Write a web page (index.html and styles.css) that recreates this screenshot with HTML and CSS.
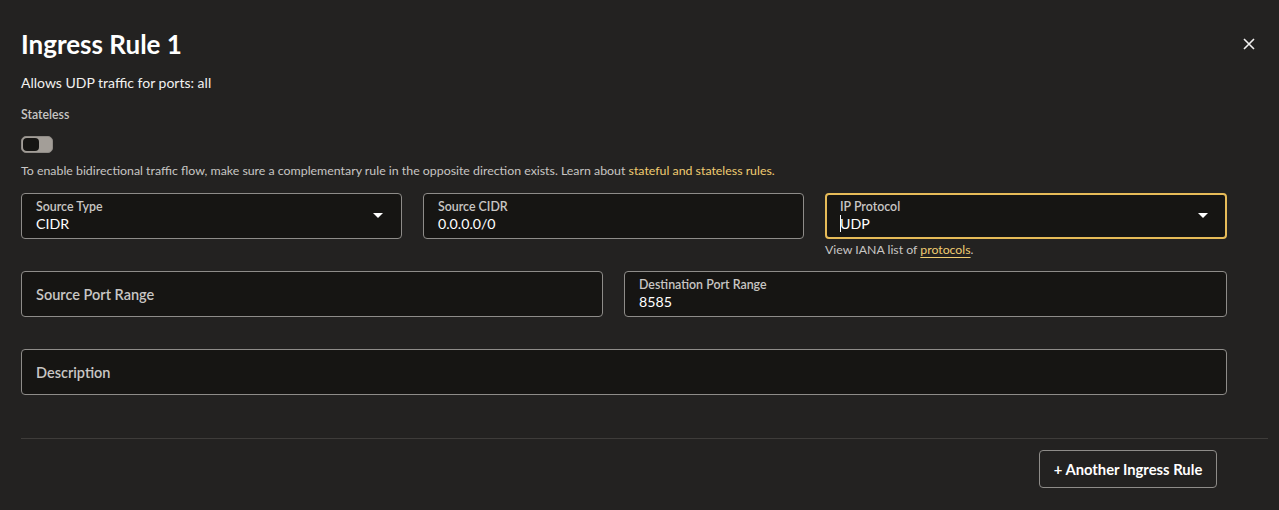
FILE: index.html
```html
<!DOCTYPE html>
<html>
<head>
<meta charset="utf-8">
<link rel="stylesheet" href="styles.css">
</head>
<body>
<div class="panel">
  <div class="header">
    <h1 class="title">Ingress Rule 1</h1>
    <button class="close" aria-label="Close">
      <svg width="12" height="12" viewBox="0 0 12 12"><path d="M1 1L11 11M11 1L1 11" stroke="#f2f1f0" stroke-width="1.6" fill="none"/></svg>
    </button>
  </div>
  <p class="summary">Allows UDP traffic for ports: all</p>
  <div class="label-small">Stateless</div>
  <div class="toggle"><span class="knob"></span></div>
  <p class="help">To enable bidirectional traffic flow, make sure a complementary rule in the opposite direction exists. Learn about <a class="link">stateful and stateless rules.</a></p>

  <div class="row row1">
    <div class="field">
      <div class="box">
        <div class="flabel">Source Type</div>
        <div class="fvalue">CIDR</div>
        <span class="caret"></span>
      </div>
    </div>
    <div class="field">
      <div class="box">
        <div class="flabel">Source CIDR</div>
        <div class="fvalue">0.0.0.0/0</div>
      </div>
    </div>
    <div class="field">
      <div class="box focused">
        <div class="flabel">IP Protocol</div>
        <div class="fvalue"><span class="cursor"></span>UDP</div>
        <span class="caret"></span>
      </div>
      <div class="assist">View IANA list of <a class="ulink">protocols</a>.</div>
    </div>
  </div>

  <div class="row row2">
    <div class="field">
      <div class="box empty"><div class="placeholder">Source Port Range</div></div>
    </div>
    <div class="field">
      <div class="box">
        <div class="flabel">Destination Port Range</div>
        <div class="fvalue">8585</div>
      </div>
    </div>
  </div>

  <div class="row row3">
    <div class="field">
      <div class="box empty"><div class="placeholder">Description</div></div>
    </div>
  </div>

  <div class="divider"></div>
  <div class="footer">
    <button class="btn">+ Another Ingress Rule</button>
  </div>
</div>
</body>
</html>
```

FILE: styles.css
```css
html, body {
  margin: 0;
  padding: 0;
  background: #232221;
  height: 100%;
}
body {
  font-family: Lato, "Noto Sans", sans-serif;
  color: #f2f1f0;
}
.panel {
  padding: 0 11px 0 21px;
}
.header {
  display: flex;
  align-items: center;
  justify-content: space-between;
  height: 44px;
  padding-top: 22px;
  padding-right: 13px;
}
.title {
  margin: 0;
  font-size: 26px;
  font-weight: 700;
  line-height: 44px;
  color: #ffffff;
}
.close {
  background: none;
  border: 0;
  padding: 0;
  width: 12px;
  height: 12px;
  display: flex;
}
.summary {
  margin: 6px 0 0;
  font-size: 14px;
  line-height: 22px;
  color: #f2f1f0;
}
.label-small {
  margin-top: 13px;
  font-size: 12.3px;
  line-height: 16px;
  color: #c8c6c4;
  font-weight: 600;
}
.toggle {
  margin-top: 13px;
  width: 32px;
  height: 17px;
  box-sizing: border-box;
  border-radius: 5px;
  background: #a39e98;
  border: 1px solid #8e8a85;
  position: relative;
}
.knob {
  position: absolute;
  left: 1px;
  top: 1px;
  width: 16px;
  height: 13px;
  border-radius: 4px;
  background: #161513;
}
.help {
  margin: 9px 0 0;
  font-size: 12.35px;
  line-height: 18px;
  color: #c8c6c4;
}
.link {
  color: #f0cc71;
}
.row {
  display: grid;
  column-gap: 21px;
  width: 1206px;
}
.row1 {
  margin-top: 13px;
  grid-template-columns: 381px 381px 1fr;
}
.row2 {
  margin-top: 13px;
  grid-template-columns: 582px 1fr;
}
.row3 {
  margin-top: 32px;
  grid-template-columns: 1fr;
}
.box {
  position: relative;
  box-sizing: border-box;
  height: 46px;
  background: #161513;
  border: 1px solid #8e8c89;
  border-radius: 4px;
  padding: 5px 14px 0;
}
.box.focused {
  border: 2px solid #e6bb58;
  padding: 4px 13px 0;
}
.box.empty {
  display: flex;
  align-items: center;
  padding-top: 0;
}
.flabel {
  font-size: 12.4px;
  line-height: 16px;
  font-weight: 600;
  color: #c8c6c4;
}
.fvalue {
  font-size: 14.2px;
  line-height: 18px;
  color: #ffffff;
  position: relative;
}
.cursor {
  display: inline-block;
  width: 1px;
  height: 17px;
  background: #ffffff;
  vertical-align: -3px;
  margin-right: -1px;
}
.placeholder {
  font-size: 14.5px;
  font-weight: 600;
  color: #c8c6c4;
}
.caret {
  position: absolute;
  right: 18px;
  top: 19px;
  width: 0;
  height: 0;
  border-left: 5px solid transparent;
  border-right: 5px solid transparent;
  border-top: 5px solid #ffffff;
}
.box.focused .caret {
  right: 17px;
  top: 18px;
}
.assist {
  margin-top: 3px;
  font-size: 12.3px;
  line-height: 16px;
  color: #c8c6c4;
}
.ulink {
  color: #f0cc71;
  text-decoration: underline;
  text-underline-offset: 3px;
}
.divider {
  margin-top: 43px;
  height: 1px;
  background: #3e3c3a;
}
.footer {
  display: flex;
  justify-content: flex-end;
  padding-right: 51px;
  margin-top: 11px;
}
.btn {
  font-family: Lato, "Noto Sans", sans-serif;
  background: transparent;
  color: #ffffff;
  border: 1px solid #8e8c89;
  border-radius: 4px;
  height: 38px;
  width: 178px;
  font-size: 14.8px;
  font-weight: 700;
  padding: 0;
}
```
